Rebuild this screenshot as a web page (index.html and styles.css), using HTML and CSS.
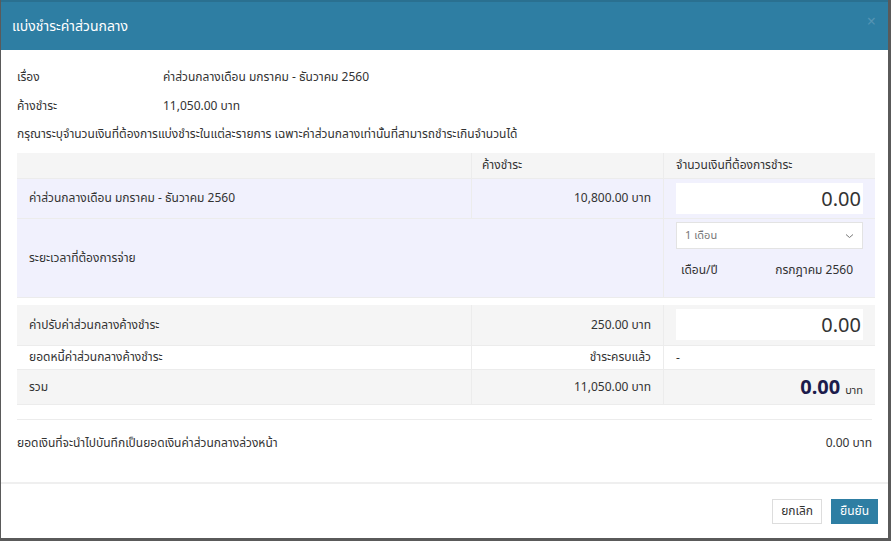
FILE: index.html
```html
<!DOCTYPE html>
<html lang="th">
<head>
<meta charset="utf-8">
<title>แบ่งชำระค่าส่วนกลาง</title>
<link rel="stylesheet" href="styles.css">
</head>
<body>
<div class="modal">
  <div class="modal-header">
    <h4 class="modal-title">แบ่งชำระค่าส่วนกลาง</h4>
    <span class="close">×</span>
  </div>
  <div class="modal-body">
    <div class="info-row"><span class="info-label">เรื่อง</span><span>ค่าส่วนกลางเดือน มกราคม - ธันวาคม 2560</span></div>
    <div class="info-row"><span class="info-label">ค้างชำระ</span><span>11,050.00 บาท</span></div>
    <p class="hint">กรุณาระบุจำนวนเงินที่ต้องการแบ่งชำระในแต่ละรายการ เฉพาะค่าส่วนกลางเท่านั้นที่สามารถชำระเกินจำนวนได้</p>
    <table class="pay-table">
      <thead>
        <tr class="head"><th class="c1"></th><th class="c2">ค้างชำระ</th><th class="c3">จำนวนเงินที่ต้องการชำระ</th></tr>
      </thead>
      <tbody>
        <tr class="lav r1"><td class="c1">ค่าส่วนกลางเดือน มกราคม - ธันวาคม 2560</td><td class="c2 num">10,800.00 บาท</td><td class="c3"><div class="amount-input">0.00</div></td></tr>
        <tr class="lav r2"><td class="c1 merged" colspan="2">ระยะเวลาที่ต้องการจ่าย</td><td class="c3">
          <div class="select"><span>1 เดือน</span><svg class="chev" width="9" height="6" viewBox="0 0 9 6"><path d="M1 1.5 L4.5 4.5 L8 1.5" fill="none" stroke="#777" stroke-width="1"/></svg></div>
          <div class="period"><span>เดือน/ปี</span><span>กรกฎาคม 2560</span></div>
        </td></tr>
        <tr class="spacer"><td colspan="3"></td></tr>
        <tr class="gray r3"><td class="c1">ค่าปรับค่าส่วนกลางค้างชำระ</td><td class="c2 num">250.00 บาท</td><td class="c3"><div class="amount-input">0.00</div></td></tr>
        <tr class="white r4"><td class="c1">ยอดหนี้ค่าส่วนกลางค้างชำระ</td><td class="c2 num">ชำระครบแล้ว</td><td class="c3">-</td></tr>
        <tr class="gray r5"><td class="c1">รวม</td><td class="c2 num">11,050.00 บาท</td><td class="c3 total"><span class="total-num">0.00</span><span class="total-unit">บาท</span></td></tr>
      </tbody>
    </table>
    <div class="advance"><span>ยอดเงินที่จะนำไปบันทึกเป็นยอดเงินค่าส่วนกลางล่วงหน้า</span><span>0.00 บาท</span></div>
  </div>
  <div class="modal-footer">
    <button class="btn btn-default">ยกเลิก</button>
    <button class="btn btn-primary">ยืนยัน</button>
  </div>
</div>
</body>
</html>
```
FILE: styles.css
```css
html, body {
  margin: 0;
  height: 100%;
}
body {
  background: #5a5a5a;
  padding: 0 3px 3px 1px;
  box-sizing: border-box;
  font-family: "Noto Sans", "Noto Sans Thai", "Liberation Sans", sans-serif;
  font-size: 12px;
  color: #333;
}
.modal {
  background: #fff;
  height: 100%;
  display: flex;
  flex-direction: column;
}
.modal-header {
  background: #2e7ea3;
  border-top: 2px solid #2a7090;
  height: 50px;
  display: flex;
  align-items: center;
  justify-content: space-between;
  padding: 0 12px 0 11px;
  box-sizing: border-box;
  flex: none;
}
.modal-title {
  margin: 0;
  font-weight: 400;
  font-size: 14px;
  color: #fff;
}
.close {
  color: #5594b3;
  font-size: 16px;
  margin-top: -10px;
}
.modal-body {
  padding: 12px 16px 0 16px;
  flex: 1;
}
.info-row {
  display: flex;
  height: 29px;
  align-items: center;
}
.info-label {
  width: 146px;
}
.hint {
  margin: 0;
  height: 28px;
  line-height: 28px;
}
.pay-table {
  width: 858px;
  border-collapse: collapse;
  margin-top: 5px;
}
.pay-table td, .pay-table th {
  padding: 0 12px;
  font-weight: 400;
  text-align: left;
  border-bottom: 1px solid #ececec;
}
.c1 { width: 430px; }
.c2 { width: 167px; border-left: 1px solid #ececec; border-right: 1px solid #ececec; }
.pay-table td.merged { border-right: 1px solid #ececec; }
.pay-table td.num { text-align: right; }
.pay-table th.c2 { padding-left: 10px; }
.head { background: #f5f5f5; height: 25px; }
.lav { background: #f1f1fd; }
.r1 { height: 40px; }
.r2 { height: 79px; }
.spacer { height: 8px; background: #fff; }
.pay-table .spacer td { border: none; }
.gray { background: #f5f5f5; }
.r3 { height: 40px; }
.r4 { height: 24px; background: #fff; }
.r5 { height: 35px; }
.amount-input {
  background: #fff;
  height: 31px;
  line-height: 31px;
  text-align: right;
  font-size: 20px;
  color: #333;
  padding-right: 2px;
}
.select {
  background: #fff;
  border: 1px solid #e3e3e3;
  height: 25px;
  display: flex;
  align-items: center;
  justify-content: space-between;
  padding: 0 8px;
  color: #777;
  font-size: 11px;
}
.period {
  display: flex;
  justify-content: space-between;
  padding: 0 10px 0 5px;
  margin-top: 12px;
  margin-bottom: 14px;
}
.pay-table td.total {
  text-align: right;
}
.total-num {
  font-size: 20px;
  font-weight: 700;
  color: #1c1c4c;
}
.total-unit {
  font-size: 11px;
  margin-left: 5px;
  color: #333;
}
.advance {
  margin-top: 14px;
  border-top: 1px solid #ececec;
  display: flex;
  justify-content: space-between;
  padding-top: 14px;
}
.modal-footer {
  border-top: 2px solid #efefef;
  height: 56px;
  box-sizing: border-box;
  display: flex;
  justify-content: flex-end;
  align-items: center;
  gap: 9px;
  padding: 0 10px 0 0;
  flex: none;
}
.btn {
  font-family: inherit;
  font-size: 12px;
  height: 25px;
  padding: 0 8px;
  border-radius: 0;
  cursor: pointer;
}
.btn-default {
  background: #fff;
  border: 1px solid #ddd;
  color: #333;
}
.btn-primary {
  background: #2e7ea3;
  border: 1px solid #2e7ea3;
  color: #fff;
}
```
